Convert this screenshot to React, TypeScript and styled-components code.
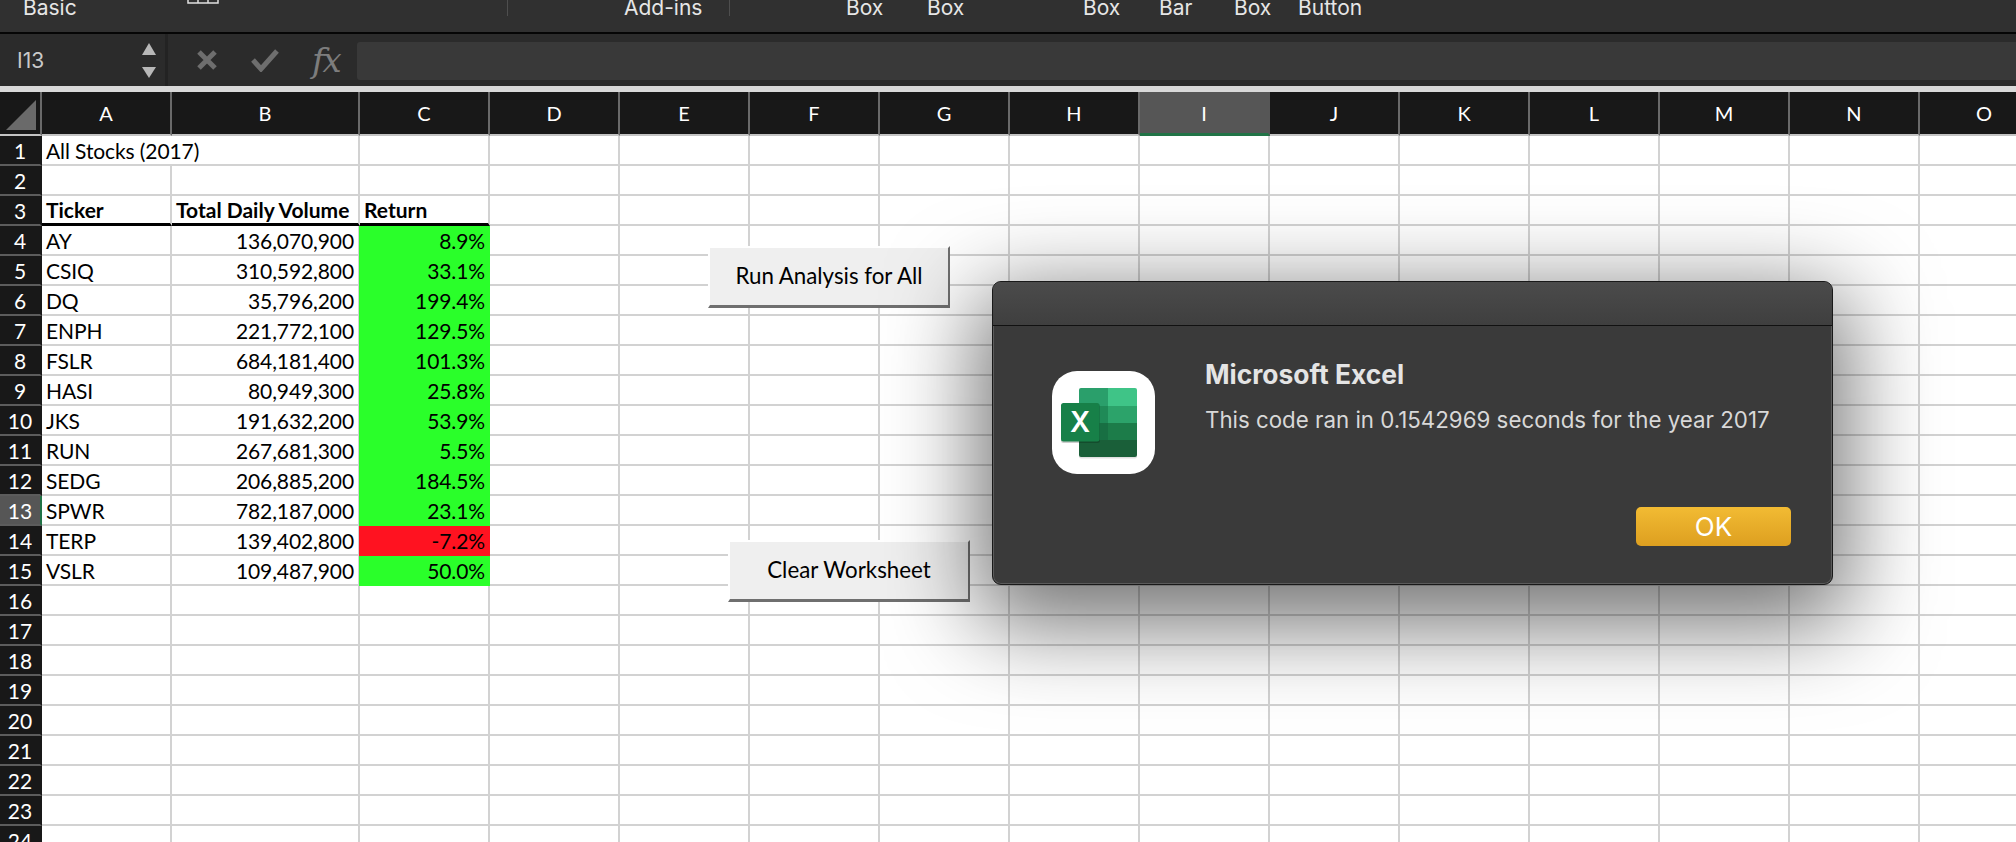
import React from "react";
import styled, { createGlobalStyle } from "styled-components";

const GlobalStyle = createGlobalStyle`
  html, body {
    margin: 0;
    padding: 0;
    background: #fff;
    overflow: hidden;
  }
`;

const chromeFont = `Inter, "Liberation Sans", sans-serif`;
const sheetFont = `Lato, "Open Sans", sans-serif`;

const Page = styled.div`
  position: relative;
  width: 2016px;
  height: 842px;
  overflow: hidden;
  background: #fff;
`;

const Ribbon = styled.div`
  display: flex;
  align-items: flex-start;
  height: 32px;
  padding-left: 23px;
  background: #303030;
  border-bottom: 2px solid #050505;
`;

const RibbonItem = styled.div<{ $width: number }>`
  flex: 0 0 ${(p) => p.$width}px;
  font: 400 21px/15px ${chromeFont};
  color: #e6e6e6;
`;

const RibbonDivider = styled.div`
  width: 1px;
  height: 16px;
  background: #4e4e4e;
`;

const FormulaBar = styled.div`
  display: flex;
  height: 52px;
  background: #2b2b2b;
  border-bottom: 6px solid #d9d9d9;
`;

const NameBox = styled.div`
  display: flex;
  align-items: center;
  justify-content: space-between;
  box-sizing: border-box;
  width: 168px;
  padding: 0 8px 0 17px;
  border-right: 3px solid #232323;
  font: 400 21px ${chromeFont};
  color: #c9c9c9;
`;

const Stepper = styled.svg`
  width: 16px;
  height: 38px;
  margin-top: 2px;
  fill: #b8b8b8;
`;

const FormulaTools = styled.div`
  display: flex;
  align-items: center;
  width: 189px;
  padding-left: 28px;
  box-sizing: border-box;
  gap: 32px;
`;

const FxLabel = styled.span`
  font: italic 400 34px/1 "DejaVu Serif", "Liberation Serif", serif;
  letter-spacing: -2px;
  color: #7d7d7d;
`;

const FormulaInput = styled.div`
  flex: 1;
  margin: 8px 0 6px;
  background: #393939;
  border-radius: 3px 0 0 3px;
`;

const Sheet = styled.div`
  display: grid;
  grid-template-columns: 42px 130px 188px repeat(13, 130px);
  grid-auto-rows: 30px;
  grid-template-rows: 44px;
  width: 2100px;
`;

const Corner = styled.div`
  background: #181818;
  border-right: 2px solid #6a6a6a;
  border-bottom: 2px solid #c4c4c4;
  svg {
    display: block;
  }
`;

const ColumnHead = styled.div<{ $selected?: boolean }>`
  display: flex;
  align-items: center;
  justify-content: center;
  box-sizing: border-box;
  background: ${(p) => (p.$selected ? "#565656" : "#181818")};
  border-right: 2px solid ${(p) => (p.$selected ? "#565656" : "#6a6a6a")};
  border-bottom: ${(p) => (p.$selected ? "3px solid #217346" : "2px solid #c4c4c4")};
  font: 400 20px ${sheetFont};
  color: #fff;
`;

const RowHead = styled.div<{ $selected?: boolean }>`
  display: flex;
  align-items: center;
  justify-content: center;
  box-sizing: border-box;
  background: ${(p) => (p.$selected ? "#565656" : "#181818")};
  border-right: 2px solid ${(p) => (p.$selected ? "#217346" : "#181818")};
  border-bottom: 2px solid #5c5c5c;
  font: 400 21px ${sheetFont};
  color: #fff;
`;

const Cell = styled.div<{
  $bold?: boolean;
  $right?: boolean;
  $fill?: string;
  $ruled?: boolean;
  $span?: number;
}>`
  grid-column: span ${(p) => p.$span ?? 1};
  display: flex;
  align-items: center;
  justify-content: ${(p) => (p.$right ? "flex-end" : "flex-start")};
  box-sizing: border-box;
  padding: 0 ${(p) => (p.$fill ? "3px" : "4px")} 0 4px;
  background: ${(p) => p.$fill ?? "#fff"};
  border-right: 2px solid ${(p) => p.$fill ?? "#d2d2d2"};
  border-bottom: ${(p) => (p.$ruled ? "3px solid #000" : `2px solid ${p.$fill ?? "#d2d2d2"}`)};
  font: ${(p) => (p.$bold ? 700 : 400)} 21px ${sheetFont};
  letter-spacing: ${(p) => (p.$bold ? "0" : "-0.1px")};
  color: #000;
  white-space: nowrap;
  margin-left: ${(p) => (p.$fill ? "-1px" : "0")};
`;

const MacroButton = styled.div<{ $left: number; $top: number }>`
  position: absolute;
  left: ${(p) => p.$left}px;
  top: ${(p) => p.$top}px;
  display: flex;
  align-items: center;
  justify-content: center;
  box-sizing: border-box;
  width: 242px;
  height: 62px;
  padding-bottom: 3px;
  background: #efefef;
  border-top: 2px solid #fff;
  border-left: 2px solid #fff;
  border-right: 2px solid #6f6f6f;
  border-bottom: 3px solid #6f6f6f;
  font: 400 22.3px ${sheetFont};
  color: #000;
`;

const Dialog = styled.div`
  position: absolute;
  left: 992px;
  top: 281px;
  display: flex;
  flex-direction: column;
  box-sizing: border-box;
  width: 841px;
  height: 304px;
  background: #3a3a3a;
  border: 1px solid #191919;
  border-radius: 9px;
  box-shadow: inset 0 0 0 1px #5b5b5b, 0 26px 90px 14px rgba(0, 0, 0, 0.55);
  overflow: hidden;
`;

const DialogTitleBar = styled.div`
  flex: 0 0 43px;
  background: linear-gradient(#4b4b4b, #3f3f3f);
  border-bottom: 1px solid #111;
`;

const DialogBody = styled.div`
  position: relative;
  display: flex;
  flex: 1;
  padding: 45px 0 0 58px;
  margin: 0 1px 1px;
`;

const AppIcon = styled.svg`
  flex: 0 0 103px;
  width: 103px;
  height: 103px;
`;

const DialogText = styled.div`
  margin: -12px 0 0 50px;
`;

const DialogTitle = styled.div`
  font: 700 26.4px/30px ${chromeFont};
  color: #e4e4e4;
`;

const DialogMessage = styled.div`
  margin-top: 17px;
  font: 400 22.3px/28px ${chromeFont};
  color: #d8d8d8;
`;

const OkButton = styled.div`
  position: absolute;
  right: 40px;
  bottom: 37px;
  display: flex;
  align-items: center;
  justify-content: center;
  width: 155px;
  height: 39px;
  background: linear-gradient(#f2bb33, #dd9f20);
  border-radius: 5px;
  font: 400 26px ${chromeFont};
  color: #fff;
`;

const ribbon: [string, number][] = [
  ["Basic", 164],
  ["", 320],
  ["", 117],
  ["Add-ins", 105],
  ["", 117],
  ["Box", 81],
  ["Box", 156],
  ["Box", 76],
  ["Bar", 75],
  ["Box", 64],
  ["Button", 100],
];

const columns = "ABCDEFGHIJKLMNO".split("");

const stocks: [string, string, string][] = [
  ["AY", "136,070,900", "8.9%"],
  ["CSIQ", "310,592,800", "33.1%"],
  ["DQ", "35,796,200", "199.4%"],
  ["ENPH", "221,772,100", "129.5%"],
  ["FSLR", "684,181,400", "101.3%"],
  ["HASI", "80,949,300", "25.8%"],
  ["JKS", "191,632,200", "53.9%"],
  ["RUN", "267,681,300", "5.5%"],
  ["SEDG", "206,885,200", "184.5%"],
  ["SPWR", "782,187,000", "23.1%"],
  ["TERP", "139,402,800", "-7.2%"],
  ["VSLR", "109,487,900", "50.0%"],
];

const GREEN = "#2aff2a";
const RED = "#ff1220";

function ExcelIcon() {
  return (
    <AppIcon viewBox="0 0 103 103">
      <rect width="103" height="103" rx="25" fill="#fff" />
      <rect x="27" y="18.5" width="58" height="69" rx="2" fill="#000" opacity="0.12" />
      <path d="M29 17h27v18H27v-16a2 2 0 0 1 2-2z" fill="#2a9f6b" />
      <path d="M56 17h27a2 2 0 0 1 2 2v16H56z" fill="#3fc487" />
      <rect x="27" y="35" width="29" height="17" fill="#1f8a57" />
      <rect x="56" y="35" width="29" height="17" fill="#2ca36a" />
      <rect x="27" y="52" width="29" height="17" fill="#186f43" />
      <rect x="56" y="52" width="29" height="17" fill="#1c7c49" />
      <path d="M27 69h58v15a2 2 0 0 1-2 2H29a2 2 0 0 1-2-2z" fill="#1a5f39" />
      <rect x="9" y="33" width="39" height="39" rx="2.5" fill="#000" opacity="0.2" />
      <rect x="9" y="32" width="38.5" height="38.5" rx="2.5" fill="#178048" />
      <text x="28.2" y="60.5" textAnchor="middle" fontFamily="Inter, sans-serif" fontWeight="600" fontSize="28" fill="#fff">
        X
      </text>
    </AppIcon>
  );
}

function sheetRow(row: number) {
  const stock = row >= 4 && row <= 15 ? stocks[row - 4] : null;
  const blanks = (from: number) =>
    columns.slice(from).map((c) => <Cell key={c + row} />);

  if (row === 1) {
    return (
      <>
        <Cell $span={2}>All Stocks (2017)</Cell>
        {blanks(2)}
      </>
    );
  }
  if (row === 3) {
    return (
      <>
        <Cell $bold $ruled>Ticker</Cell>
        <Cell $bold $ruled>Total Daily Volume</Cell>
        <Cell $bold $ruled>Return</Cell>
        {blanks(3)}
      </>
    );
  }
  if (stock) {
    return (
      <>
        <Cell>{stock[0]}</Cell>
        <Cell $right>{stock[1]}</Cell>
        <Cell $right $fill={stock[2].startsWith("-") ? RED : GREEN}>{stock[2]}</Cell>
        {blanks(3)}
      </>
    );
  }
  return blanks(0);
}

export default function App() {
  return (
    <Page>
      <GlobalStyle />
      <Ribbon>
        {ribbon.map(([label, width], i) => (
          <RibbonItem key={i} $width={width}>
            {label}
            {i === 1 && (
              <svg width="32" height="4" viewBox="0 0 32 4" style={{ display: "block" }}>
                <path d="M1 0v3h30V0M11 0v3M21 0v3" fill="none" stroke="#e0e0e0" strokeWidth="1.5" />
              </svg>
            )}
            {(i === 2 || i === 4) && <RibbonDivider />}
          </RibbonItem>
        ))}
      </Ribbon>
      <FormulaBar>
        <NameBox>
          I13
          <Stepper viewBox="0 0 16 38">
            <path d="M8 1l7 12H1z" />
            <path d="M8 36L1 25h14z" />
          </Stepper>
        </NameBox>
        <FormulaTools>
          <svg width="22" height="22" viewBox="0 0 22 22">
            <path d="M3 3l16 16M19 3L3 19" stroke="#6e6e6e" strokeWidth="5" fill="none" />
          </svg>
          <svg width="30" height="24" viewBox="0 0 30 24">
            <path d="M3 12l8 9L27 3" stroke="#6e6e6e" strokeWidth="5" fill="none" />
          </svg>
          <FxLabel>fx</FxLabel>
        </FormulaTools>
        <FormulaInput />
      </FormulaBar>
      <Sheet>
        <Corner>
          <svg width="40" height="42" viewBox="0 0 40 42">
            <path d="M36 8v30H6z" fill="#6a6a6a" />
          </svg>
        </Corner>
        {columns.map((c) => (
          <ColumnHead key={c} $selected={c === "I"}>{c}</ColumnHead>
        ))}
        {Array.from({ length: 24 }, (_, i) => i + 1).map((row) => (
          <React.Fragment key={row}>
            <RowHead $selected={row === 13}>{row}</RowHead>
            {sheetRow(row)}
          </React.Fragment>
        ))}
      </Sheet>
      <MacroButton $left={708} $top={246}>Run Analysis for All</MacroButton>
      <MacroButton $left={728} $top={540}>Clear Worksheet</MacroButton>
      <Dialog>
        <DialogTitleBar />
        <DialogBody>
          <ExcelIcon />
          <DialogText>
            <DialogTitle>Microsoft Excel</DialogTitle>
            <DialogMessage>This code ran in 0.1542969 seconds for the year 2017</DialogMessage>
          </DialogText>
          <OkButton>OK</OkButton>
        </DialogBody>
      </Dialog>
    </Page>
  );
}
